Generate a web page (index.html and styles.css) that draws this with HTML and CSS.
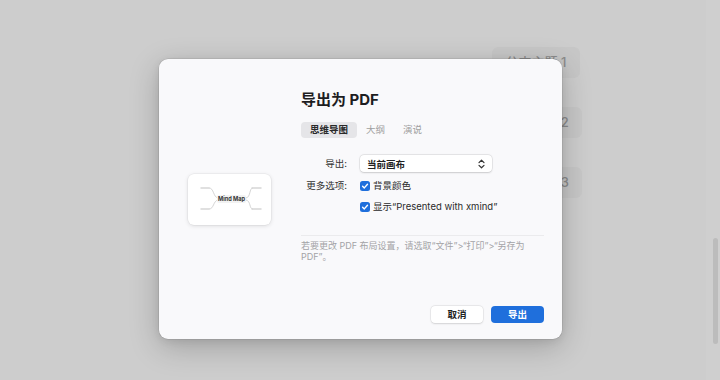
FILE: index.html
```html
<!DOCTYPE html>
<html lang="zh">
<head>
<meta charset="utf-8">
<link rel="stylesheet" href="styles.css">
</head>
<body>
<div class="screen">
  <div class="canvas">
    <div class="node node1">分支主题 1</div>
    <div class="node node2">分支主题 2</div>
    <div class="node node3">分支主题 3</div>
    <div class="scrolltrack"><div class="scrollthumb"></div></div>
  </div>

  <div class="dialog">
    <div class="preview-col">
      <div class="thumb">
        <svg width="83" height="51" viewBox="0 0 83 51">
          <g fill="none" stroke="#c2c2c2" stroke-width="0.7">
            <path d="M30 24 C25 23 26 14 21 14"/>
            <path d="M30 26 C25 27 26 35 21 35"/>
            <path d="M58 24 C63 23 61 14 65 14"/>
            <path d="M58 26 C63 27 61 35 65 35"/>
          </g>
          <g stroke="#d6d6d6" stroke-width="1.5" stroke-linecap="round">
            <line x1="13" y1="14" x2="21" y2="14"/>
            <line x1="13" y1="35" x2="21" y2="35"/>
            <line x1="64" y1="14" x2="73" y2="14"/>
            <line x1="64" y1="35" x2="73" y2="35"/>
          </g>
          <rect x="29" y="21" width="29" height="8" rx="2" fill="#f2f2f2"/>
          <text x="43.5" y="27" text-anchor="middle" class="thumb-text">Mind Map</text>
        </svg>
      </div>
    </div>

    <div class="main-col">
      <div class="title">导出为 PDF</div>
      <div class="tabs">
        <div class="tab active">思维导图</div>
        <div class="tab">大纲</div>
        <div class="tab">演说</div>
      </div>

      <div class="form">
        <div class="label">导出:</div>
        <div class="select">
          <span>当前画布</span>
          <svg class="chev" width="7" height="10" viewBox="0 0 7 10">
            <path d="M1 3.6 L3.5 1.2 L6 3.6 M1 6.4 L3.5 8.8 L6 6.4" fill="none" stroke="#333" stroke-width="1.2" stroke-linecap="round" stroke-linejoin="round"/>
          </svg>
        </div>

        <div class="label">更多选项:</div>
        <div class="check-row">
          <span class="checkbox"><svg width="10" height="10" viewBox="0 0 10 10"><path d="M2.6 5.2 L4.3 6.9 L7.5 3.2" fill="none" stroke="#fff" stroke-width="1.4" stroke-linecap="round" stroke-linejoin="round"/></svg></span>
          <span>背景颜色</span>
        </div>

        <div class="label"></div>
        <div class="check-row">
          <span class="checkbox"><svg width="10" height="10" viewBox="0 0 10 10"><path d="M2.6 5.2 L4.3 6.9 L7.5 3.2" fill="none" stroke="#fff" stroke-width="1.4" stroke-linecap="round" stroke-linejoin="round"/></svg></span>
          <span>显示“Presented with xmind”</span>
        </div>
      </div>

      <div class="divider"></div>
      <div class="note">若要更改 PDF 布局设置，请选取“文件”&gt;“打印”&gt;“另存为 PDF”。</div>

      <div class="buttons">
        <div class="btn btn-cancel">取消</div>
        <div class="btn btn-primary">导出</div>
      </div>
    </div>
  </div>
</div>
</body>
</html>
```

FILE: styles.css
```css
html, body {
  margin: 0;
  padding: 0;
}
body {
  background: #cdcdcd;
  font-family: "Inter", "Noto Sans CJK SC", sans-serif;
  color: #222;
}
.screen {
  position: relative;
  width: 720px;
  height: 380px;
  overflow: hidden;
  background: #cdcdcd;
}
.canvas {
  position: absolute;
  inset: 0;
}
.node {
  position: absolute;
  left: 492px;
  width: 90px;
  height: 31px;
  border-radius: 6px;
  background: #c7c7c7;
  color: #8c8c8c;
  font-size: 13px;
  line-height: 31px;
  text-align: center;
  font-weight: 500;
}
.node1 { top: 47px; width: 88px; }
.node2 { top: 107px; }
.node3 { top: 167px; }
.scrolltrack {
  position: absolute;
  right: 0;
  top: 0;
  width: 14px;
  height: 380px;
  background: #cfcfcf;
}
.scrollthumb {
  position: absolute;
  left: 7px;
  top: 238px;
  width: 5px;
  height: 106px;
  border-radius: 3px;
  background: #bcbcbc;
}

.dialog {
  position: absolute;
  left: 159px;
  top: 59px;
  width: 403px;
  height: 280px;
  box-sizing: border-box;
  padding: 31px 18px 16px 29px;
  background: #f9f9fb;
  border-radius: 9px;
  box-shadow: 0 0 0 0.5px rgba(0,0,0,0.12), 0 8px 30px rgba(0,0,0,0.22), 0 2px 8px rgba(0,0,0,0.08);
  display: flex;
}
.preview-col {
  display: flex;
  align-items: center;
  width: 83px;
  margin-right: 30px;
}
.thumb {
  width: 83px;
  height: 51px;
  background: #fff;
  border-radius: 6px;
  box-shadow: 0 0 0 0.5px rgba(0,0,0,0.06), 0 1px 4px rgba(0,0,0,0.12);
  margin-bottom: 15px;
}
.thumb svg { display: block; }
.thumb-text {
  font-family: "Inter", sans-serif;
  font-size: 5.6px;
  font-weight: 700;
  fill: #333;
}
.main-col {
  flex: 1;
  display: flex;
  flex-direction: column;
}
.title {
  font-size: 15px;
  font-weight: 700;
  line-height: 20px;
  color: #1d1d1f;
}
.tabs {
  display: flex;
  margin-top: 12px;
}
.tab {
  font-size: 9.5px;
  line-height: 16px;
  height: 16px;
  padding: 0 9px;
  color: #a0a0a0;
  border-radius: 4px;
}
.tab.active {
  background: #e5e5e8;
  color: #2a2a2a;
  font-weight: 700;
}
.form {
  display: grid;
  grid-template-columns: 46px 1fr;
  column-gap: 13px;
  row-gap: 7px;
  margin-top: 17px;
  align-items: center;
}
.label {
  font-size: 9.5px;
  text-align: right;
  color: #333;
  line-height: 14px;
}
.select {
  width: 132px;
  height: 17px;
  box-sizing: border-box;
  background: #fff;
  border-radius: 4px;
  box-shadow: 0 0 0 0.5px rgba(0,0,0,0.1), 0 0.5px 2px rgba(0,0,0,0.14);
  display: flex;
  align-items: center;
  justify-content: space-between;
  padding: 0 7px;
  font-size: 9.5px;
  font-weight: 600;
  color: #222;
}
.chev { display: block; }
.check-row {
  display: flex;
  align-items: center;
  gap: 3px;
  font-size: 9.5px;
  line-height: 14px;
  height: 14px;
  color: #2a2a2a;
}
.checkbox {
  width: 10px;
  height: 10px;
  border-radius: 2.5px;
  background: #1f6fdc;
  display: block;
}
.checkbox svg { display: block; }
.divider {
  height: 1px;
  background: #ebebed;
  margin-top: 21px;
}
.note {
  margin-top: 4px;
  font-size: 9px;
  line-height: 11px;
  color: #a3a3a6;
  max-width: 236px;
}
.buttons {
  margin-top: auto;
  display: flex;
  justify-content: flex-end;
  gap: 8px;
}
.btn {
  width: 52px;
  height: 17px;
  border-radius: 4px;
  font-size: 9.5px;
  font-weight: 600;
  line-height: 17px;
  text-align: center;
}
.btn-cancel {
  background: #fff;
  color: #222;
  box-shadow: 0 0 0 0.5px rgba(0,0,0,0.08), 0 0.5px 2px rgba(0,0,0,0.12);
}
.btn-primary {
  width: 53px;
  background: #1f6fdc;
  color: #fff;
}
```
